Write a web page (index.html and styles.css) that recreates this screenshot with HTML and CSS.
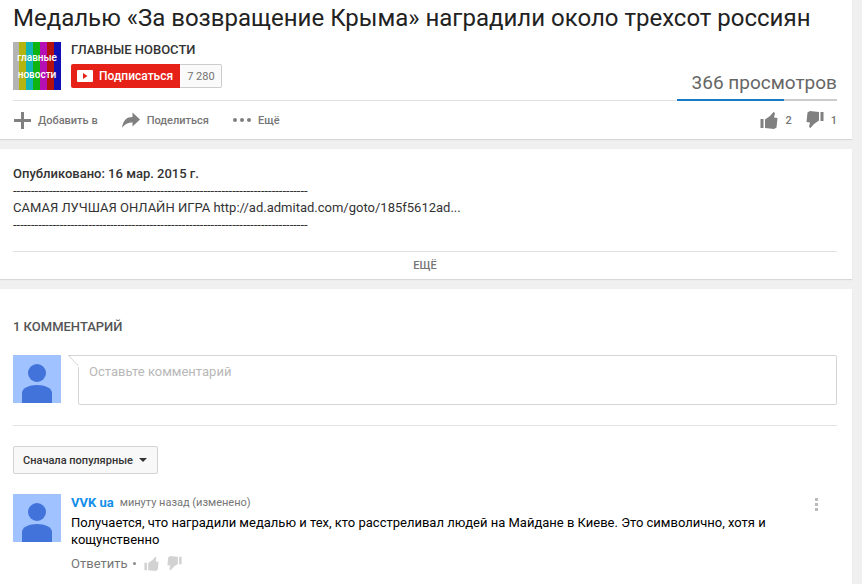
FILE: index.html
```html
<!DOCTYPE html>
<html lang="ru">
<head>
<meta charset="utf-8">
<title>Медалью «За возвращение Крыма» наградили около трехсот россиян</title>
<link rel="stylesheet" href="styles.css">
</head>
<body>
<svg class="defs" width="0" height="0" aria-hidden="true">
  <symbol id="thumb" viewBox="0 0 18 18">
    <path d="M0.500 8H3.500v9H0.500zM5 8.500l5-3.500 3.500-4 1.500 1-1 4.500 3.500 0.500-1 9.500-2.500 1.500-9-1z"/>
  </symbol>
  <symbol id="person" viewBox="0 0 48 48">
    <rect width="48" height="48" fill="#a0c2ff"/>
    <circle cx="24" cy="18" r="9" fill="#4273db"/>
    <path d="M9 48V38c0-5 7-8 15-8s15 3 15 8v10z" fill="#4273db"/>
  </symbol>
</svg>
<main class="page">

  <section class="card watch-header">
    <h1 class="title">Медалью «За возвращение Крыма» наградили около трехсот россиян</h1>
    <div class="owner-row">
      <a class="channel-logo" href="#"><span>главные</span><span>новости</span></a>
      <div class="owner">
        <a class="channel-name" href="#">ГЛАВНЫЕ НОВОСТИ</a>
        <div class="subscribe">
          <button class="subscribe-button" type="button">
            <svg width="16" height="12" viewBox="0 0 16 12"><rect width="16" height="12" rx="1" fill="#fff"/><path d="M6 3l4.500 3L6 9z" fill="#e62117"/></svg>
            Подписаться
          </button>
          <span class="subscriber-count">7 280</span>
        </div>
      </div>
      <div class="views">
        <div class="view-count">366 просмотров</div>
        <div class="sparkbar"><div class="likes" style="width: 66.67%"></div></div>
      </div>
    </div>
    <div class="actions">
      <button class="action" type="button">
        <svg width="18" height="18" viewBox="0 0 18 18"><path d="M8 1h3v7h7v3h-7v7h-3v-7H1V8h7z"/></svg>
        Добавить в
      </button>
      <button class="action" type="button">
        <svg width="18" height="16" viewBox="0 0 18 16"><path d="M0 16C1 8 5 5 10.500 5V0.500L18 7.500l-7.500 7V10.500C6 10.500 3 12 0 16z"/></svg>
        Поделиться
      </button>
      <button class="action" type="button">
        <svg width="18" height="4" viewBox="0 0 18 4"><circle cx="2" cy="2" r="2"/><circle cx="9" cy="2" r="2"/><circle cx="16" cy="2" r="2"/></svg>
        Ещё
      </button>
      <div class="votes">
        <button class="action" type="button" aria-label="Нравится"><svg width="18" height="18"><use href="#thumb"/></svg>2</button>
        <button class="action" type="button" aria-label="Не нравится"><svg class="down" width="18" height="18"><use href="#thumb"/></svg>1</button>
      </div>
    </div>
  </section>

  <section class="card description">
    <div class="description-text">
      <strong>Опубликовано: 16 мар. 2015 г.</strong>
      <p>----------------------------------------------------------------------------------</p>
      <p>САМАЯ ЛУЧШАЯ ОНЛАЙН ИГРА http://ad.admitad.com/goto/185f5612ad...</p>
      <p>----------------------------------------------------------------------------------</p>
    </div>
    <button class="show-more" type="button">ЕЩЁ</button>
  </section>

  <section class="card comments">
    <h2 class="comments-title">1 КОММЕНТАРИЙ</h2>
    <form class="comment-form">
      <svg class="avatar" width="48" height="48"><use href="#person"/></svg>
      <div class="comment-box">
        <svg class="comment-tip" width="11" height="12" viewBox="0 0 11 12"><path d="M0 0h11v12h-1V11L0 1z" fill="#fff"/><path d="M0 0.500H11M0.500 0.500L10.500 11" fill="none" stroke="#d5d5d5"/></svg>
        <textarea class="comment-input" placeholder="Оставьте комментарий" aria-label="Оставьте комментарий"></textarea>
      </div>
    </form>
    <div class="sort">
      <button class="sort-button" type="button">Сначала популярные
        <svg width="8" height="4" viewBox="0 0 8 4"><path d="M0 0h8L4 4z"/></svg>
      </button>
    </div>
    <article class="comment">
      <svg class="avatar" width="48" height="48"><use href="#person"/></svg>
      <div class="comment-body">
        <div class="comment-meta">
          <a class="comment-author" href="#">VVK ua</a>
          <a class="comment-time" href="#">минуту назад (изменено)</a>
        </div>
        <p class="comment-text">Получается, что наградили медалью и тех, кто расстреливал людей на Майдане в Киеве. Это символично, хотя и кощунственно</p>
        <div class="comment-footer">
          <button class="reply" type="button">Ответить</button>
          <span class="dot"></span>
          <button class="vote" type="button" aria-label="Нравится"><svg width="15" height="15"><use href="#thumb"/></svg></button>
          <button class="vote" type="button" aria-label="Не нравится"><svg class="down" width="15" height="15"><use href="#thumb"/></svg></button>
        </div>
      </div>
      <button class="menu" type="button" aria-label="Меню">
        <svg width="3" height="13" viewBox="0 0 3 13"><path d="M0 0h3v3H0zM0 5h3v3H0zM0 10h3v3H0z"/></svg>
      </button>
    </article>
  </section>

</main>
</body>
</html>
```

FILE: styles.css
```css
* {
    box-sizing: border-box;
}

body {
    margin: 0;
    background: #fff;
    color: #333;
    font: 13px/17px Roboto, sans-serif;
}

h1, h2, p {
    margin: 0;
}

a {
    text-decoration: none;
}

button {
    margin: 0;
    padding: 0;
    border: 0;
    background: none;
    font-family: inherit;
    cursor: pointer;
}

svg {
    display: block;
    flex: none;
}

.defs {
    position: absolute;
}

.page {
    display: flex;
    flex-direction: column;
    gap: 10px;
    min-height: 100vh;
    margin-right: 6px;
    padding-right: 10px;
    background: #f0f0f0;
}

.card {
    padding: 0 15px 0 13px;
    background: #fff;
    box-shadow: 0 1px 1px rgba(0, 0, 0, .1);
}

/* header */
.title {
    padding: 4px 0 10px;
    color: #222;
    font-size: 24px;
    font-weight: 400;
    line-height: 28px;
}

.owner-row {
    display: flex;
    height: 59px;
    border-bottom: 1px solid #e2e2e2;
}

.channel-logo {
    display: flex;
    flex-direction: column;
    justify-content: center;
    align-items: center;
    width: 48px;
    height: 48px;
    background: linear-gradient(90deg, #b4b4b4 0 6px, #b4b410 6px 13px, #10b4b4 13px 20px, #10b410 20px 27px, #b410b4 27px 34px, #b41010 34px 41px, #1010b4 41px);
    color: #fff;
    font-size: 10px;
    font-weight: 500;
}

.owner {
    margin-left: 10px;
}

.channel-name {
    display: block;
    height: 22px;
    color: #333;
    font-weight: 500;
    line-height: 16px;
}

.subscribe {
    display: flex;
}

.subscribe-button {
    display: flex;
    align-items: center;
    gap: 6px;
    height: 24px;
    padding: 0 7px 0 6px;
    border-radius: 2px 0 0 2px;
    background: #e62117;
    color: #fff;
    font-size: 12px;
    font-weight: 500;
}

.subscriber-count {
    height: 24px;
    padding: 0 6px 0 7px;
    border: 1px solid #ccc;
    border-left: 0;
    border-radius: 0 2px 2px 0;
    background: #fafafa;
    color: #737373;
    font-size: 11px;
    line-height: 24px;
}

.views {
    display: flex;
    flex-direction: column;
    justify-content: flex-end;
    width: 160px;
    margin: 0 0 -1px auto;
}

.view-count {
    color: #666;
    font-size: 19px;
    line-height: 24px;
    text-align: right;
    white-space: nowrap;
}

.sparkbar {
    height: 2px;
    margin-top: 4px;
    background: #ccc;
}

.likes {
    height: 2px;
    background: #167ac6;
}

.actions {
    display: flex;
    align-items: center;
    gap: 24px;
    height: 38px;
}

.action {
    display: flex;
    align-items: center;
    gap: 7px;
    color: #767676;
    font-size: 11px;
    font-weight: 500;
    fill: #808080;
}

.down {
    transform: rotate(180deg);
}

.votes {
    display: flex;
    gap: 14px;
    margin-left: auto;
}

/* description */
.description-text {
    padding: 16px 0 18px;
}

.description strong {
    font-weight: 500;
}

.show-more {
    display: block;
    width: 100%;
    height: 28px;
    border-top: 1px solid #e2e2e2;
    color: #767676;
    font-size: 11px;
    font-weight: 500;
}

/* comments */
.comments {
    flex: 1;
    padding-bottom: 10px;
}

.comments-title {
    padding: 29px 0 20px;
    color: #555;
    font-size: 13px;
    font-weight: 500;
}

.comment-form {
    display: flex;
    gap: 17px;
    padding-bottom: 20px;
    border-bottom: 1px solid #e2e2e2;
}

.comment-box {
    position: relative;
    flex: 1;
}

.comment-tip {
    position: absolute;
    top: 0;
    left: -10px;
}

.comment-input {
    display: block;
    width: 100%;
    height: 50px;
    padding: 7px 10px;
    border: 1px solid #d5d5d5;
    border-radius: 0 2px 2px 2px;
    outline: 0;
    font: inherit;
    resize: none;
}

.comment-input::placeholder {
    color: #b8b8b8;
}

.sort {
    padding: 20px 0;
}

.sort-button {
    display: flex;
    align-items: center;
    gap: 6px;
    height: 28px;
    padding: 0 10px 0 9px;
    border: 1px solid #d3d3d3;
    border-radius: 2px;
    background: #f8f8f8;
    color: #333;
    font-size: 11px;
    font-weight: 500;
    fill: #333;
}

.comment {
    display: flex;
    gap: 10px;
}

.comment-body {
    flex: 1;
}

.comment-meta {
    display: flex;
    gap: 6px;
    height: 20px;
}

.comment-author {
    color: #128ee9;
    font-weight: 700;
}

.comment-time {
    color: #767676;
    font-size: 11px;
    line-height: 18px;
}

.comment-text {
    color: #000;
}

.comment-footer {
    display: flex;
    align-items: center;
    height: 30px;
}

.reply {
    color: #767676;
    font-size: 13px;
}

.dot {
    width: 3px;
    height: 3px;
    margin: 0 8px 0 5px;
    border-radius: 50%;
    background: #8a8a8a;
}

.vote {
    margin-right: 8px;
    fill: #d2d2d2;
}

.menu {
    align-self: flex-start;
    margin-right: 19px;
    padding-top: 4px;
    fill: #bbb;
}
```
